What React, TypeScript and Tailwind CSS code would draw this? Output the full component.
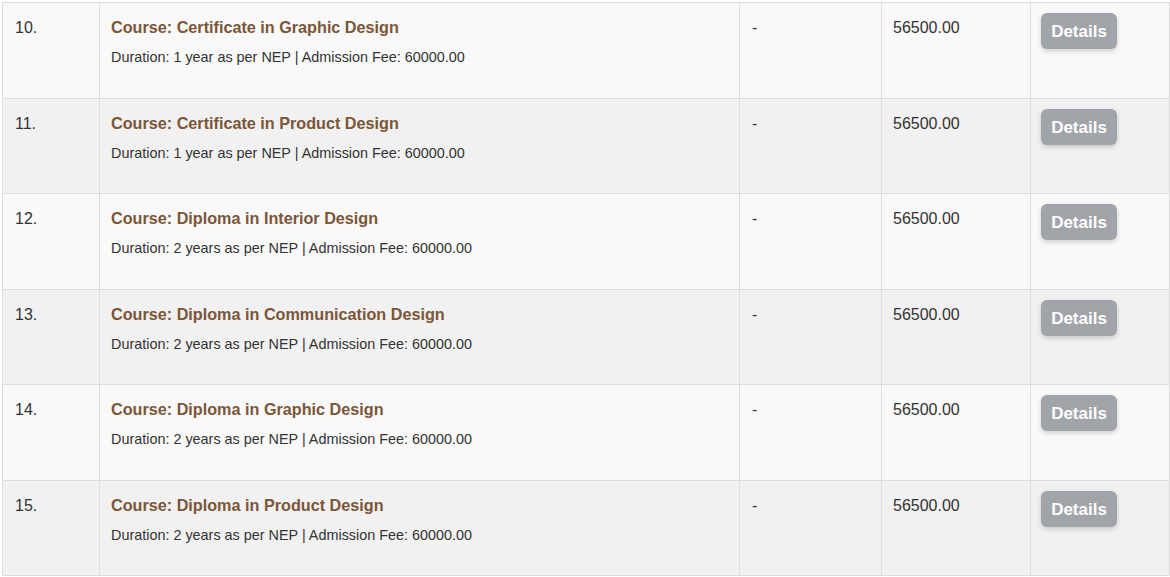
import React from "react";

const rows = [
  { n: "10.", title: "Course: Certificate in Graphic Design", dur: "1 year" },
  { n: "11.", title: "Course: Certificate in Product Design", dur: "1 year" },
  { n: "12.", title: "Course: Diploma in Interior Design", dur: "2 years" },
  { n: "13.", title: "Course: Diploma in Communication Design", dur: "2 years" },
  { n: "14.", title: "Course: Diploma in Graphic Design", dur: "2 years" },
  { n: "15.", title: "Course: Diploma in Product Design", dur: "2 years" },
];

export default function App() {
  return (
    <div className="bg-white w-[1170px] h-[577px] pt-[2px] pl-[2px]" style={{ fontFamily: '"Liberation Sans", Arial, sans-serif' }}>
      <table className="border-collapse w-[1167px] table-fixed text-[16px] text-[#333]">
        <colgroup>
          <col className="w-[97px]" />
          <col className="w-[640px]" />
          <col className="w-[142px]" />
          <col className="w-[149px]" />
          <col className="w-[139px]" />
        </colgroup>
        <tbody>
          {rows.map((r, i) => (
            <tr key={r.n} className={`${i % 2 === 0 ? "bg-[#f9f9f9]" : "bg-[#f1f1f1]"} h-[95.5px]`}>
              <td className="border border-[#dddddd] align-top px-[12px] pt-[14px] leading-[22px]">{r.n}</td>
              <td className="border border-[#dddddd] align-top px-[11px] pt-[13px]">
                <div className="font-bold text-[#7b5638] text-[16.2px] leading-[22px]">{r.title}</div>
                <div className="text-[14.4px] text-[#333] leading-[20px] mt-[9px]">
                  Duration: {r.dur} as per NEP | Admission Fee: 60000.00
                </div>
              </td>
              <td className="border border-[#dddddd] align-top px-[12px] pt-[14px] leading-[22px]">-</td>
              <td className="border border-[#dddddd] align-top px-[11px] pt-[14px] leading-[22px]">56500.00</td>
              <td className="border border-[#dddddd] align-top pl-[10px] pt-[10px]">
                <button className="w-[76px] h-[36px] rounded-[6px] bg-[#a1a4a9] text-white font-bold text-[17px] leading-[36px] pt-[1px] shadow-[0_2px_5px_rgba(0,0,0,0.18)]">
                  Details
                </button>
              </td>
            </tr>
          ))}
        </tbody>
      </table>
    </div>
  );
}
